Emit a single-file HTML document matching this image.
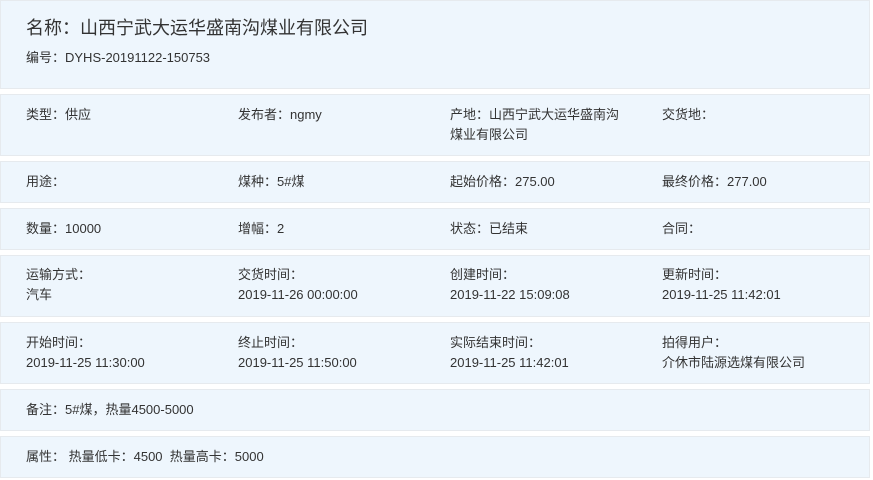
<!DOCTYPE html>
<html><head><meta charset="utf-8"><style>
*{margin:0;padding:0;box-sizing:border-box}
body{width:873px;height:480px;background:#fff;font-family:"Liberation Sans","Noto Sans CJK SC",sans-serif;color:#333;font-size:13px;position:relative;overflow:hidden}
.p{position:absolute;left:0;width:870px;background:#eef6fd;border:1px solid #e6eaee}
.t{position:absolute;white-space:nowrap;line-height:20px}
</style></head><body>
<div class="p" style="top:0;height:89px"></div>
<div class="t" style="left:26px;top:14px;font-size:18px;line-height:28px">名称：山西宁武大运华盛南沟煤业有限公司</div>
<div class="t" style="left:26px;top:48px">编号：DYHS-20191122-150753</div>

<div class="p" style="top:94px;height:62px"></div>
<div class="t" style="left:26px;top:105px">类型：供应</div>
<div class="t" style="left:238px;top:105px">发布者：ngmy</div>
<div class="t" style="left:450px;top:105px">产地：山西宁武大运华盛南沟<br>煤业有限公司</div>
<div class="t" style="left:662px;top:105px">交货地：</div>

<div class="p" style="top:161px;height:42px"></div>
<div class="t" style="left:26px;top:172px">用途：</div>
<div class="t" style="left:238px;top:172px">煤种：5#煤</div>
<div class="t" style="left:450px;top:172px">起始价格：275.00</div>
<div class="t" style="left:662px;top:172px">最终价格：277.00</div>

<div class="p" style="top:208px;height:42px"></div>
<div class="t" style="left:26px;top:219px">数量：10000</div>
<div class="t" style="left:238px;top:219px">增幅：2</div>
<div class="t" style="left:450px;top:219px">状态：已结束</div>
<div class="t" style="left:662px;top:219px">合同：</div>

<div class="p" style="top:255px;height:62px"></div>
<div class="t" style="left:26px;top:265px">运输方式：<br>汽车</div>
<div class="t" style="left:238px;top:265px">交货时间：<br>2019-11-26 00:00:00</div>
<div class="t" style="left:450px;top:265px">创建时间：<br>2019-11-22 15:09:08</div>
<div class="t" style="left:662px;top:265px">更新时间：<br>2019-11-25 11:42:01</div>

<div class="p" style="top:322px;height:62px"></div>
<div class="t" style="left:26px;top:333px">开始时间：<br>2019-11-25 11:30:00</div>
<div class="t" style="left:238px;top:333px">终止时间：<br>2019-11-25 11:50:00</div>
<div class="t" style="left:450px;top:333px">实际结束时间：<br>2019-11-25 11:42:01</div>
<div class="t" style="left:662px;top:333px">拍得用户：<br>介休市陆源选煤有限公司</div>

<div class="p" style="top:389px;height:42px"></div>
<div class="t" style="left:26px;top:400px">备注：5#煤，热量4500-5000</div>

<div class="p" style="top:436px;height:42px"></div>
<div class="t" style="left:26px;top:447px">属性： 热量低卡：4500&nbsp; 热量高卡：5000</div>
</body></html>
